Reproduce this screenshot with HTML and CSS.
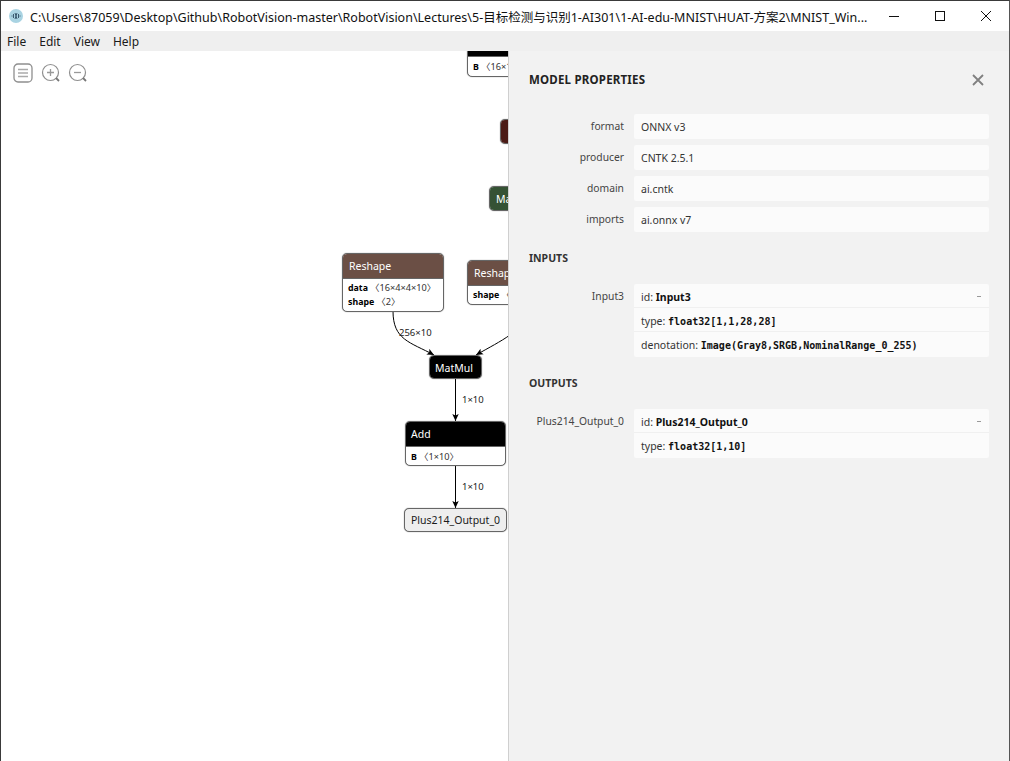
FILE: index.html
```html
<!DOCTYPE html>
<html lang="en">
<head>
<meta charset="utf-8">
<title>MNIST</title>
<link rel="stylesheet" href="styles.css">
</head>
<body>
<div class="window">
  <header class="titlebar">
    <svg class="app-icon" width="16" height="16" viewBox="0 0 16 16"><circle cx="8" cy="8" r="7" fill="#a9d3e2"/><path d="M3.5 8h1M5.5 6v4M7 5l2 6M9 5l-2 6M10.5 6v4M11.5 8h1" stroke="#3a5a70" stroke-width="1" fill="none"/></svg>
    <div class="title-text">C:\Users\87059\Desktop\Github\RobotVision-master\RobotVision\Lectures\5-目标检测与识别1-AI301\1-AI-edu-MNIST\HUAT-方案2\MNIST_Win...</div>
    <div class="win-controls">
      <button class="win-btn"><svg width="12" height="12" viewBox="0 0 12 12"><path d="M1 6.5h10" stroke="#111" fill="none"/></svg></button>
      <button class="win-btn"><svg width="12" height="12" viewBox="0 0 12 12"><rect x="1.5" y="1.5" width="9" height="9" stroke="#111" fill="none"/></svg></button>
      <button class="win-btn"><svg width="12" height="12" viewBox="0 0 12 12"><path d="M1 1l10 10M11 1L1 11" stroke="#111" fill="none"/></svg></button>
    </div>
  </header>
  <nav class="menubar"><span>File</span><span>Edit</span><span>View</span><span>Help</span></nav>
  <main class="content">
    <section class="canvas">
      <div class="toolbar">
        <svg width="20" height="20" viewBox="0 0 20 20"><rect x="1" y="1" width="18" height="18" rx="4" fill="#fff" stroke="#8f8f8f" stroke-width="1.3"/><path d="M5 6.5h10M5 10h10M5 13.500h10" stroke="#aaa" stroke-width="1.4"/></svg>
        <svg width="20" height="20" viewBox="0 0 20 20"><circle cx="9.500" cy="9.500" r="8" fill="#fff" stroke="#8f8f8f" stroke-width="1.200"/><path d="M15 15l3 3" stroke="#777" stroke-width="1.800"/><path d="M6 9.500h7M9.500 6v7" stroke="#999" stroke-width="1.300"/></svg>
        <svg width="20" height="20" viewBox="0 0 20 20"><circle cx="9.500" cy="9.500" r="8" fill="#fff" stroke="#8f8f8f" stroke-width="1.200"/><path d="M15 15l3 3" stroke="#777" stroke-width="1.800"/><path d="M6 9.500h7" stroke="#999" stroke-width="1.300"/></svg>
      </div>

      <svg class="edges" width="507" height="710" viewBox="1 51 507 710">
        <defs><marker id="arrow" markerWidth="8" markerHeight="8" refX="7" refY="4" orient="auto" markerUnits="userSpaceOnUse"><path d="M0 .8L7 4L0 7.200L1.600 4z" fill="#000"/></marker></defs>
        <path d="M393 311C393 340 410 342 434 355" class="edge"/>
        <path d="M510 335C500 342 490 347 476 355" class="edge"/>
        <path d="M455.500 378.500V421" class="edge"/>
        <path d="M455.500 465V508" class="edge"/>
      </svg>
      <span class="edge-label l1">256×10</span>
      <span class="edge-label l2">1×10</span>
      <span class="edge-label l3">1×10</span>

      <div class="node n-top"><div class="node-head black"></div><div class="attrs"><div><b>B</b> 〈16×1〉</div></div></div>
      <div class="node n-red"><div class="node-head red solo">Dropout</div></div>
      <div class="node n-green"><div class="node-head green solo">MaxPool</div></div>
      <div class="node n-res1"><div class="node-head brown">Reshape</div><div class="attrs"><div><b>data</b> 〈16×4×4×10〉</div><div><b>shape</b> 〈2〉</div></div></div>
      <div class="node n-res2"><div class="node-head brown">Reshape</div><div class="attrs"><div><b>shape</b> 〈2〉</div></div></div>
      <div class="node n-mat"><div class="node-head black solo">MatMul</div></div>
      <div class="node n-add"><div class="node-head black">Add</div><div class="attrs"><div><b>B</b> 〈1×10〉</div></div></div>
      <div class="node n-out">Plus214_Output_0</div>
    </section>

    <aside class="sidebar">
      <div class="side-head">
        <h1>MODEL PROPERTIES</h1>
        <svg width="12" height="12" viewBox="0 0 12 12"><path d="M1 1l10 10M11 1L1 11" stroke="#808080" stroke-width="1.800" fill="none"/></svg>
      </div>
      <div class="rows">
        <div class="row"><div class="key">format</div><div class="val"><div class="line">ONNX v3</div></div></div>
        <div class="row"><div class="key">producer</div><div class="val"><div class="line">CNTK 2.5.1</div></div></div>
        <div class="row"><div class="key">domain</div><div class="val"><div class="line">ai.cntk</div></div></div>
        <div class="row"><div class="key">imports</div><div class="val"><div class="line">ai.onnx v7</div></div></div>
      </div>
      <h2>INPUTS</h2>
      <div class="rows">
        <div class="row"><div class="key">Input3</div><div class="val">
          <div class="line sep idline"><span>id: <b>Input3</b></span><i class="dash"></i></div>
          <div class="line sep">type: <code>float32[1,1,28,28]</code></div>
          <div class="line">denotation: <code>Image(Gray8,SRGB,NominalRange_0_255)</code></div>
        </div></div>
      </div>
      <h2>OUTPUTS</h2>
      <div class="rows">
        <div class="row"><div class="key">Plus214_Output_0</div><div class="val">
          <div class="line sep idline"><span>id: <b>Plus214_Output_0</b></span><i class="dash"></i></div>
          <div class="line">type: <code>float32[1,10]</code></div>
        </div></div>
      </div>
    </aside>
  </main>
</div>
</body>
</html>
```
FILE: styles.css
```css
* { box-sizing: border-box; }
html, body { margin: 0; height: 100%; }
body { font-family: "Noto Sans", "Noto Sans CJK SC", sans-serif; color: #1a1a1a; overflow: hidden; background: #fff; }
.window { height: 761px; display: flex; flex-direction: column; border: 1px solid #3a3a3a; border-bottom: 0; border-right-color: #555; }
.titlebar { height: 30px; background: #fff; display: flex; align-items: center; padding-left: 7px; flex: none; }
.app-icon { flex: none; margin-top: -1px; }
.title-text { margin-left: 6px; font-size: 12.500px; white-space: nowrap; overflow: hidden; flex: 1; color: #111; }
.win-controls { display: flex; flex: none; }
.win-btn { width: 46px; height: 30px; border: 0; background: none; padding: 0; display: flex; align-items: center; justify-content: center; }
.menubar { height: 20px; background: #efefef; display: flex; flex: none; gap: 13px; padding-left: 6px; align-items: center; font-size: 12px; }
.content { flex: 1; display: flex; min-height: 0; }
.canvas { width: 507px; flex: none; position: relative; overflow: hidden; background: #fff; }
.toolbar { display: flex; gap: 7.500px; padding: 12px 0 0 12px; position: relative; z-index: 2; }
.toolbar svg { display: block; }
.edges { position: absolute; left: 0; top: 0; }
.edge { fill: none; stroke: #000; stroke-width: 1; marker-end: url(#arrow); }
.edge-label { position: absolute; font-size: 9.500px; line-height: 12px; color: #222; }
.l1 { left: 398px; top: 276px; }
.l2 { left: 461px; top: 343px; }
.l3 { left: 461px; top: 430px; }

.node { position: absolute; border: 1px solid #666; box-shadow: 0 0 1px #666; border-radius: 5px; background: #fff; overflow: hidden; font-size: 10.500px; }
.node-head { height: 24px; line-height: 24px; padding-left: 6px; color: #fff; font-size: 10.500px; white-space: nowrap; }
.node-head.solo { height: 100%; }
.black { background: #000; }
.red { background: #4b1b16; }
.red.solo { padding-left: 7px; }
.green { background: #355234; }
.brown { background: #6b4f45; }
.attrs { border-top: 1px solid #666; padding: 2px 5px; font-size: 9.200px; line-height: 14px; white-space: nowrap; color: #333; }
.attrs b { color: #000; font-size: 8.800px; }
.n-top { left: 466px; top: -24px; width: 100px; height: 50px; }
.n-top .node-head { height: 28px; }
.n-top .attrs { padding-top: 3px; }
.n-red { left: 499px; top: 68px; width: 60px; height: 25px; }
.n-green { left: 488px; top: 135px; width: 70px; height: 25px; }
.n-res1 { left: 341px; top: 202px; width: 102px; height: 59px; }
.n-res2 { left: 466px; top: 209px; width: 102px; height: 45px; }
.n-mat { left: 428px; top: 304px; width: 53px; height: 24px; }
.n-mat .node-head { padding-left: 5px; }
.n-add { left: 404px; top: 370px; width: 101px; height: 45px; }
.n-add .node-head { padding-left: 5px; }
.n-add .attrs { padding-top: 3px; }
.n-out { left: 403px; top: 457px; width: 103px; height: 24px; line-height: 23px; text-align: center; background: #eee; white-space: nowrap; }

.sidebar { flex: 1; background: #f2f2f2; border-left: 1px solid #cfcfcf; padding: 0 20px; font-size: 10.500px; color: #333; min-width: 0; }
.side-head { height: 63px; display: flex; align-items: center; justify-content: space-between; padding-right: 5px; padding-bottom: 6px; }
.side-head h1 { margin: 0; font-size: 11.500px; font-weight: 700; color: #222; letter-spacing: .2px; }
.rows { display: flex; flex-direction: column; gap: 6px; }
.row { display: flex; gap: 10px; }
.key { width: 95px; flex: none; text-align: right; line-height: 25px; font-size: 10.300px; color: #444; white-space: nowrap; }
.val { flex: 1; background: #fbfbfb; border-radius: 2px; min-width: 0; }
.line { height: 25px; line-height: 25px; padding: 1px 7px 0; white-space: pre; color: #333; }
.line.sep { border-bottom: 1px solid #f0f0f0; height: 24px; line-height: 24px; }
.idline { display: flex; }
.idline span { flex: 1; }
.line b { color: #111; font-weight: 700; }
.line code { font-family: "DejaVu Sans Mono", monospace; font-size: 10px; color: #111; font-weight: 700; }
.dash { width: 4px; height: 1px; background: #999; align-self: center; margin-right: 1px; }
h2 { margin: 20px 0 19px; font-size: 10.500px; line-height: 13px; font-weight: 700; color: #333; }
```
